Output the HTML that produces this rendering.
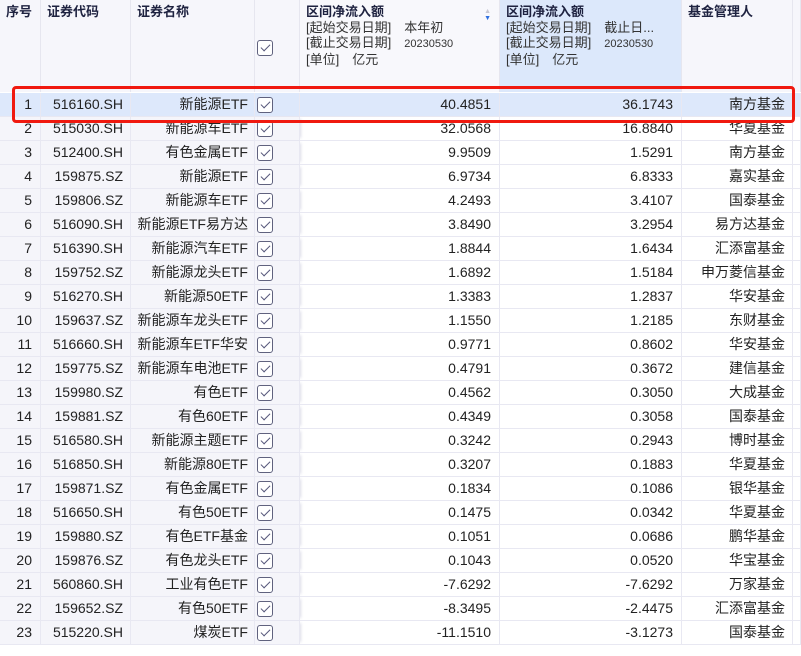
<!DOCTYPE html>
<html><head><meta charset="utf-8"><style>
*{margin:0;padding:0;box-sizing:border-box}
body{width:801px;height:656px;overflow:hidden;background:#fff;font-family:"Liberation Sans","Noto Sans CJK SC",sans-serif;color:#222;position:relative}
.hd{position:absolute;top:0;height:92px;background:#f6f6fb;border-right:1px solid #e6e6ef;font-size:13px;line-height:15px;padding:4px 0 0 6px;color:#333}
.hd b{color:#1e2240;font-weight:bold;display:block;margin-bottom:1px}
.row{position:absolute;left:0;width:801px;height:24px;border-bottom:1px solid #e8e8f2;font-size:14px;line-height:23px}
.row div{position:absolute;top:0;height:23px;text-align:right;border-right:1px solid #e8e8f2;white-space:nowrap}
.c1{left:0;width:41px;padding-right:8px;background:#f5f5fa}
.c2{left:41px;width:90px;padding-right:7px;background:#f5f5fa}
.c3{left:131px;width:124px;padding-right:6px;background:#f5f5fa}
.c4{left:255px;width:45px;background:#f5f5fa;box-shadow:3px 0 3px -2px #dcdce8}
.c5{left:300px;width:200px;padding-right:8px}
.c6{left:500px;width:182px;padding-right:8px}
.c7{left:682px;width:111px;padding-right:7px}
.c8{left:793px;width:8px}
.cb{position:absolute;left:2px;top:4px;width:16px;height:16px;border:1px solid #60627e;border-radius:3px;background:#fff}
.cb:after{content:"";position:absolute;left:3px;top:3px;width:8px;height:4px;border-left:1.5px solid #55577a;border-bottom:1.5px solid #55577a;transform:rotate(-45deg)}
.sel div{background:#dde8fb}
.red{position:absolute;left:12px;top:86px;width:783px;height:37px;border:3px solid #f0190f;border-radius:4px;z-index:5}
</style></head><body>
<div class="hd" style="left:0;width:41px"><b>序号</b></div>
<div class="hd" style="left:41px;width:90px"><b>证券代码</b></div>
<div class="hd" style="left:131px;width:124px"><b>证券名称</b></div>
<div class="hd" style="left:255px;width:45px;box-shadow:3px 0 3px -2px #dcdce8"><span class="cb" style="top:40px"></span></div>
<div class="hd" style="left:300px;width:200px;background:#f8f8fc"><b>区间净流入额</b>[起始交易日期]　本年初<br>[截止交易日期]　<span style="font-size:11px">20230530</span><br>[单位]　亿元
<span style="position:absolute;right:8px;top:8px;font-size:7px;line-height:7px;color:#c8c8d4">▲</span><span style="position:absolute;right:8px;top:15px;font-size:7px;line-height:7px;color:#2d6fe0">▼</span></div>
<div class="hd" style="left:500px;width:182px;background:#dce8fb"><b>区间净流入额</b>[起始交易日期]　截止日...<br>[截止交易日期]　<span style="font-size:11px">20230530</span><br>[单位]　亿元</div>
<div class="hd" style="left:682px;width:111px"><b>基金管理人</b></div>
<div class="hd" style="left:793px;width:8px"></div>

<div class="row sel" style="top:93px"><div class="c1">1</div><div class="c2">516160.SH</div><div class="c3">新能源ETF</div><div class="c4"><span class="cb"></span></div><div class="c5">40.4851</div><div class="c6">36.1743</div><div class="c7">南方基金</div><div class="c8"></div></div>
<div class="row" style="top:117px"><div class="c1">2</div><div class="c2">515030.SH</div><div class="c3">新能源车ETF</div><div class="c4"><span class="cb"></span></div><div class="c5">32.0568</div><div class="c6">16.8840</div><div class="c7">华夏基金</div><div class="c8"></div></div>
<div class="row" style="top:141px"><div class="c1">3</div><div class="c2">512400.SH</div><div class="c3">有色金属ETF</div><div class="c4"><span class="cb"></span></div><div class="c5">9.9509</div><div class="c6">1.5291</div><div class="c7">南方基金</div><div class="c8"></div></div>
<div class="row" style="top:165px"><div class="c1">4</div><div class="c2">159875.SZ</div><div class="c3">新能源ETF</div><div class="c4"><span class="cb"></span></div><div class="c5">6.9734</div><div class="c6">6.8333</div><div class="c7">嘉实基金</div><div class="c8"></div></div>
<div class="row" style="top:189px"><div class="c1">5</div><div class="c2">159806.SZ</div><div class="c3">新能源车ETF</div><div class="c4"><span class="cb"></span></div><div class="c5">4.2493</div><div class="c6">3.4107</div><div class="c7">国泰基金</div><div class="c8"></div></div>
<div class="row" style="top:213px"><div class="c1">6</div><div class="c2">516090.SH</div><div class="c3">新能源ETF易方达</div><div class="c4"><span class="cb"></span></div><div class="c5">3.8490</div><div class="c6">3.2954</div><div class="c7">易方达基金</div><div class="c8"></div></div>
<div class="row" style="top:237px"><div class="c1">7</div><div class="c2">516390.SH</div><div class="c3">新能源汽车ETF</div><div class="c4"><span class="cb"></span></div><div class="c5">1.8844</div><div class="c6">1.6434</div><div class="c7">汇添富基金</div><div class="c8"></div></div>
<div class="row" style="top:261px"><div class="c1">8</div><div class="c2">159752.SZ</div><div class="c3">新能源龙头ETF</div><div class="c4"><span class="cb"></span></div><div class="c5">1.6892</div><div class="c6">1.5184</div><div class="c7">申万菱信基金</div><div class="c8"></div></div>
<div class="row" style="top:285px"><div class="c1">9</div><div class="c2">516270.SH</div><div class="c3">新能源50ETF</div><div class="c4"><span class="cb"></span></div><div class="c5">1.3383</div><div class="c6">1.2837</div><div class="c7">华安基金</div><div class="c8"></div></div>
<div class="row" style="top:309px"><div class="c1">10</div><div class="c2">159637.SZ</div><div class="c3">新能源车龙头ETF</div><div class="c4"><span class="cb"></span></div><div class="c5">1.1550</div><div class="c6">1.2185</div><div class="c7">东财基金</div><div class="c8"></div></div>
<div class="row" style="top:333px"><div class="c1">11</div><div class="c2">516660.SH</div><div class="c3">新能源车ETF华安</div><div class="c4"><span class="cb"></span></div><div class="c5">0.9771</div><div class="c6">0.8602</div><div class="c7">华安基金</div><div class="c8"></div></div>
<div class="row" style="top:357px"><div class="c1">12</div><div class="c2">159775.SZ</div><div class="c3">新能源车电池ETF</div><div class="c4"><span class="cb"></span></div><div class="c5">0.4791</div><div class="c6">0.3672</div><div class="c7">建信基金</div><div class="c8"></div></div>
<div class="row" style="top:381px"><div class="c1">13</div><div class="c2">159980.SZ</div><div class="c3">有色ETF</div><div class="c4"><span class="cb"></span></div><div class="c5">0.4562</div><div class="c6">0.3050</div><div class="c7">大成基金</div><div class="c8"></div></div>
<div class="row" style="top:405px"><div class="c1">14</div><div class="c2">159881.SZ</div><div class="c3">有色60ETF</div><div class="c4"><span class="cb"></span></div><div class="c5">0.4349</div><div class="c6">0.3058</div><div class="c7">国泰基金</div><div class="c8"></div></div>
<div class="row" style="top:429px"><div class="c1">15</div><div class="c2">516580.SH</div><div class="c3">新能源主题ETF</div><div class="c4"><span class="cb"></span></div><div class="c5">0.3242</div><div class="c6">0.2943</div><div class="c7">博时基金</div><div class="c8"></div></div>
<div class="row" style="top:453px"><div class="c1">16</div><div class="c2">516850.SH</div><div class="c3">新能源80ETF</div><div class="c4"><span class="cb"></span></div><div class="c5">0.3207</div><div class="c6">0.1883</div><div class="c7">华夏基金</div><div class="c8"></div></div>
<div class="row" style="top:477px"><div class="c1">17</div><div class="c2">159871.SZ</div><div class="c3">有色金属ETF</div><div class="c4"><span class="cb"></span></div><div class="c5">0.1834</div><div class="c6">0.1086</div><div class="c7">银华基金</div><div class="c8"></div></div>
<div class="row" style="top:501px"><div class="c1">18</div><div class="c2">516650.SH</div><div class="c3">有色50ETF</div><div class="c4"><span class="cb"></span></div><div class="c5">0.1475</div><div class="c6">0.0342</div><div class="c7">华夏基金</div><div class="c8"></div></div>
<div class="row" style="top:525px"><div class="c1">19</div><div class="c2">159880.SZ</div><div class="c3">有色ETF基金</div><div class="c4"><span class="cb"></span></div><div class="c5">0.1051</div><div class="c6">0.0686</div><div class="c7">鹏华基金</div><div class="c8"></div></div>
<div class="row" style="top:549px"><div class="c1">20</div><div class="c2">159876.SZ</div><div class="c3">有色龙头ETF</div><div class="c4"><span class="cb"></span></div><div class="c5">0.1043</div><div class="c6">0.0520</div><div class="c7">华宝基金</div><div class="c8"></div></div>
<div class="row" style="top:573px"><div class="c1">21</div><div class="c2">560860.SH</div><div class="c3">工业有色ETF</div><div class="c4"><span class="cb"></span></div><div class="c5">-7.6292</div><div class="c6">-7.6292</div><div class="c7">万家基金</div><div class="c8"></div></div>
<div class="row" style="top:597px"><div class="c1">22</div><div class="c2">159652.SZ</div><div class="c3">有色50ETF</div><div class="c4"><span class="cb"></span></div><div class="c5">-8.3495</div><div class="c6">-2.4475</div><div class="c7">汇添富基金</div><div class="c8"></div></div>
<div class="row" style="top:621px"><div class="c1">23</div><div class="c2">515220.SH</div><div class="c3">煤炭ETF</div><div class="c4"><span class="cb"></span></div><div class="c5">-11.1510</div><div class="c6">-3.1273</div><div class="c7">国泰基金</div><div class="c8"></div></div>
<div class="red"></div>
</body></html>
